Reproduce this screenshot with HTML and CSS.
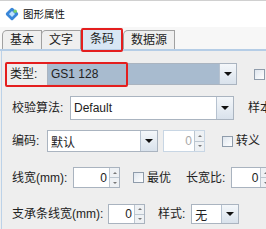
FILE: index.html
```html
<!DOCTYPE html>
<html>
<head>
<meta charset="utf-8">
<link rel="stylesheet" href="styles.css">
</head>
<body>
<div class="win">
  <div class="titlebar">
    <svg class="appicon" width="13" height="13" viewBox="0 0 13 13">
      <rect x="2" y="2" width="9" height="9" rx="1.5" transform="rotate(45 6.5 6.5)" fill="#3a86d8"/>
      <rect x="4.5" y="4.5" width="4" height="4" transform="rotate(45 6.5 6.5)" fill="#bfe3ff"/>
      <circle cx="9.5" cy="4" r="1.6" fill="#7ed36a"/>
    </svg>
    <span class="title">图形属性</span>
  </div>
  <div class="tabstrip">
    <div class="tab">基本</div>
    <div class="tab">文字</div>
    <div class="tab sel">条码</div>
    <div class="tab">数据源</div>
  </div>
  <div class="panel">
    <div class="row r1">
      <span class="hl"></span>
      <span class="lbl l1">类型:</span>
      <div class="combo selcombo w-type"><span class="val">GS1 128</span><span class="btn"><i class="arr"></i></span></div>
      <span class="chk right-chk"></span>
    </div>
    <div class="row r2">
      <span class="lbl l2">校验算法:</span>
      <div class="combo w-alg"><span class="val">Default</span><span class="btn"><i class="arr"></i></span></div>
      <span class="lbl extra">样本</span>
    </div>
    <div class="row r3">
      <span class="lbl l3">编码:</span>
      <div class="combo w-enc"><span class="val">默认</span><span class="btn"><i class="arr"></i></span></div>
      <div class="spin dis w-sp1"><span class="num">0</span><span class="sbtns"><i class="up"></i><i class="dn"></i></span></div>
      <span class="chk c3"></span><span class="lbl">转义</span>
    </div>
    <div class="row r4">
      <span class="lbl l4">线宽(mm):</span>
      <div class="spin w-sp2"><span class="num">0</span><span class="sbtns"><i class="up"></i><i class="dn"></i></span></div>
      <span class="chk c4"></span><span class="lbl">最优</span>
      <span class="lbl ratio">长宽比:</span>
      <div class="spin w-sp3"><span class="num">0</span><span class="sbtns"><i class="up"></i><i class="dn"></i></span></div>
    </div>
    <div class="row r5">
      <span class="lbl l5">支承条线宽(mm):</span>
      <div class="spin w-sp4"><span class="num">0</span><span class="sbtns"><i class="up"></i><i class="dn"></i></span></div>
      <span class="lbl style">样式:</span>
      <div class="combo w-sty"><span class="val">无</span><span class="btn"><i class="arr"></i></span></div>
    </div>
  </div>
</div>
</body>
</html>
```
FILE: styles.css
```css
* { box-sizing: border-box; }
html, body { margin: 0; padding: 0; }
body {
  width: 266px; height: 229px; overflow: hidden;
  font-family: "Liberation Sans", "Noto Sans CJK SC", sans-serif;
  font-size: 12px; color: #222; background: #eeeeee;
}
.win { width: 266px; height: 229px; overflow: hidden; background: #eeeeee; }
.titlebar {
  height: 27px; background: #ffffff; border-top: 1px solid #d0d0d0;
  display: flex; align-items: center; padding-left: 5px; gap: 4px;
}
.appicon { display: block; width: 14px; height: 14px; }
.title { font-size: 10.5px; line-height: 12px; color: #111; }
.tabstrip {
  height: 24px; background: #f7f7f7; display: flex; align-items: flex-end;
  padding-left: 2px; border-bottom: 2px solid #b5cde6;
}
.tab {
  height: 19px; padding: 0 7px; border: 1px solid #a0a0a0; border-bottom: none;
  border-top-left-radius: 5px; background: #efefef;
  display: flex; align-items: center; font-size: 12px; line-height: 14px; margin-right: -1px;
}
.tab.sel {
  height: 21px; width: 40px; background: #d8e6f4; justify-content: center;
  position: relative; z-index: 1; margin: 0 1px 0 2px; border-radius: 2px 2px 0 0;
}
.tab.sel::after {
  content: ""; position: absolute; left: -2px; right: -2px; top: -1px; bottom: -3px;
  border: 2px solid #e41e1e; border-radius: 2px;
}
.panel {
  height: 178px; border-left: 1px solid #bcd2e8; margin-left: 1px;
  padding: 12px 0 0 10px; display: flex; flex-direction: column;
}
.row { display: flex; align-items: center; position: relative; }
.r1 { height: 22px; }
.r2 { height: 24px; margin-top: 11px; }
.r3 { height: 22px; margin-top: 10px; }
.r4 { height: 21px; margin-top: 15px; }
.r5 { height: 20px; margin-top: 16px; }
.hl {
  position: absolute; left: -7px; top: -1px; width: 123px; height: 25px;
  border: 2px solid #e41e1e; border-radius: 2px; z-index: 2;
}
.lbl { white-space: nowrap; line-height: 14px; flex: none; }
.l1 { width: 37px; margin-left: -2px; }
.l2 { width: 58px; }
.l3 { width: 35px; }
.l4 { width: 61px; }
.l5 { width: 96px; }
.combo {
  height: 100%; border: 1px solid #aab4c0; background: #fff; display: flex; align-items: stretch; flex: none;
}
.combo .val { flex: 1; display: flex; align-items: center; padding-left: 3px; font-size: 12px; }
.combo .btn {
  width: 17px; border-left: 1px solid #b6c2d0;
  background: linear-gradient(#f4f7fa, #d9e2ec); display: flex; align-items: center; justify-content: center;
}
.arr { width: 0; height: 0; border-left: 4px solid transparent; border-right: 4px solid transparent; border-top: 4px solid #111; }
.selcombo { background: #a8bbcf; }
.w-type { width: 190px; }
.w-alg { width: 164px; }
.extra { margin-left: 14px; }
.w-enc { width: 111px; }
.w-sp1 { width: 42px; margin-left: 5px; }
.spin { height: 100%; border: 1px solid #a9b3bf; background: #fff; display: flex; flex: none; }
.spin .num { flex: 1; display: flex; align-items: center; justify-content: flex-end; padding-right: 2px; font-size: 12px; }
.spin.dis { border-color: #c8d6e4; }
.spin.dis .num { color: #a8a8a8; }
.sbtns { width: 10px; display: flex; flex-direction: column; border-left: 1px solid #bcc6d0; }
.sbtns i { flex: 1; display: flex; align-items: center; justify-content: center; background: #eef1f4; }
.sbtns i + i { border-top: 1px solid #bcc6d0; }
.sbtns .up::after { content: ""; border-left: 2px solid transparent; border-right: 2px solid transparent; border-bottom: 2px solid #777; }
.sbtns .dn::after { content: ""; border-left: 2px solid transparent; border-right: 2px solid transparent; border-top: 2px solid #777; }
.chk {
  width: 11px; height: 11px; border: 1px solid #8f9cab; background: linear-gradient(135deg, #dfe6ee, #ffffff);
  margin-right: 3px; flex: none;
}
.right-chk { margin-left: 17px; }
.c3 { margin-left: 17px; }
.w-sp2 { width: 47px; }
.c4 { margin-left: 13px; }
.ratio { margin-left: 15px; }
.w-sp3 { width: 40px; margin-left: 6px; }
.w-sp4 { width: 37px; }
.style { margin-left: 13px; }
.w-sty { width: 48px; margin-left: 6px; }
```
